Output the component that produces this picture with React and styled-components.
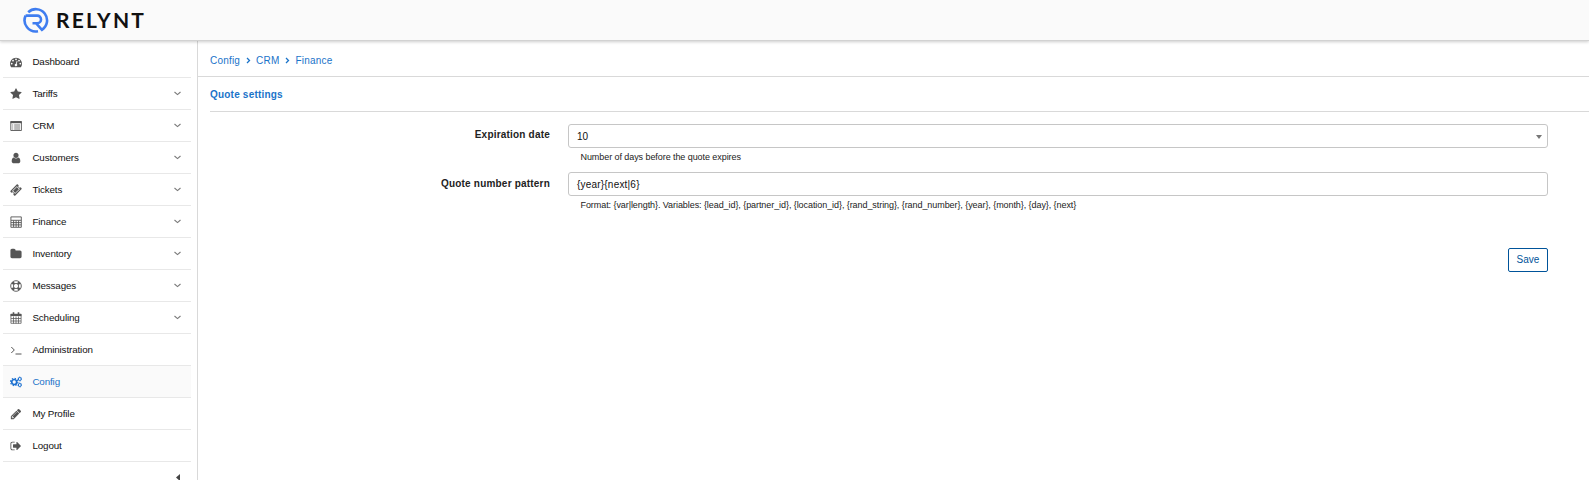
import React from 'react';
import styled, { createGlobalStyle } from 'styled-components';

const GlobalStyle = createGlobalStyle`
  * { box-sizing: border-box; }
  body { margin: 0; background: #fff; overflow: hidden; font-family: "Liberation Sans", Arial, sans-serif; color: #222; }
`;

const Page = styled.div`
  display: flex;
  flex-direction: column;
  height: 480px;
  overflow: hidden;
`;

const Header = styled.header`
  display: flex;
  align-items: center;
  flex: none;
  height: 41px;
  padding-left: 23px;
  background: #fafafa;
  border-bottom: 1px solid #d2d2d2;
  box-shadow: 0 1px 3px rgba(0, 0, 0, 0.2);
  z-index: 1;
`;

const LogoMark = styled.svg`
  width: 26px;
  height: 26px;
`;

const LogoText = styled.span`
  margin-left: 7px;
  padding-bottom: 1px;
  font: 700 21px/25px Lato, sans-serif;
  letter-spacing: 2.2px;
  color: #111;
`;

const Body = styled.div`
  display: flex;
  flex: 1;
  min-height: 0;
`;

const Sidebar = styled.nav`
  flex: none;
  width: 198px;
  padding: 5px 6px 0 3px;
  border-right: 1px solid #d9d9d9;
`;

const NavItem = styled.a`
  display: flex;
  align-items: center;
  height: 32px;
  padding: 0 7px;
  border-bottom: 1px solid #e8e8e8;
  background: ${(p) => (p.$active ? '#fafafa' : 'transparent')};
  color: ${(p) => (p.$active ? '#1a73c9' : '#111')};
  font-size: 9.8px;
  letter-spacing: -0.12px;
`;

const NavIcon = styled.svg`
  width: 12px;
  height: 12px;
  color: ${(p) => (p.$active ? '#1a6fd0' : '#555')};
`;

const NavLabel = styled.span`
  flex: 1;
  margin-left: 10.4px;
`;

const Chevron = styled.svg`
  width: 7px;
  height: 5px;
  margin-right: 3px;
`;

const CollapseRow = styled.div`
  display: flex;
  justify-content: flex-end;
  padding: 12px 11px 0 0;
`;

const Main = styled.main`
  flex: 1;
  min-width: 0;
`;

const Breadcrumbs = styled.div`
  display: flex;
  align-items: center;
  height: 36px;
  padding: 3px 0 0 12px;
  border-bottom: 1px solid #d9d9d9;
  font-size: 10px;
  letter-spacing: 0.2px;
  color: #1a73c9;
`;

const Separator = styled.svg`
  width: 5px;
  height: 7px;
  margin: 0 5px 0 6px;
`;

const SectionTitle = styled.h2`
  height: 35px;
  margin: 0 0 12px 12px;
  border-bottom: 1px solid #d9d9d9;
  font-size: 10px;
  line-height: 36px;
  letter-spacing: 0.2px;
  color: #1a73c9;
`;

const Field = styled.div`
  display: grid;
  grid-template-columns: 352px 980px;
  column-gap: 18px;
  height: 48px;
`;

const Label = styled.label`
  padding-top: ${(p) => p.$offset}px;
  text-align: right;
  font-size: 10px;
  line-height: 12px;
  font-weight: 700;
  letter-spacing: 0.2px;
  color: #222;
`;

const Control = styled.div`
  display: flex;
  align-items: center;
  justify-content: space-between;
  height: 24px;
  padding: 1px 5px 0 8px;
  border: 1px solid #c6c6c6;
  border-radius: 3px;
  font-size: 10px;
  letter-spacing: ${(p) => p.$spacing || 0}px;
  color: #111;
`;

const Help = styled.div`
  padding: 4px 0 0 12.5px;
  font-size: 9px;
  line-height: 11px;
  letter-spacing: -0.07px;
`;

const Actions = styled.div`
  display: flex;
  justify-content: flex-end;
  margin-top: 28px;
  padding-right: 41px;
`;

const SaveButton = styled.button`
  width: 40px;
  height: 24px;
  padding: 0 0 1px;
  border: 1px solid #00549a;
  border-radius: 2px;
  background: #fff;
  font: 10px "Liberation Sans", Arial, sans-serif;
  color: #00549a;
`;

const solid = {
  dashboard: 'M384 1152q0-53-37.5-90.5t-90.5-37.5-90.5 37.5-37.5 90.5 37.5 90.5 90.5 37.5 90.5-37.5 37.5-90.5zm192-448q0-53-37.5-90.5t-90.5-37.5-90.5 37.5-37.5 90.5 37.5 90.5 90.5 37.5 90.5-37.5 37.5-90.5zm428 481l101-382q6-26-7.5-48.5t-38.5-29.5-48 6.5-30 39.5l-101 382q-60 5-107 43.5t-63 98.5q-20 77 20 146t117 89 146-20 89-117q16-60-6-117t-72-91zm660-33q0-53-37.5-90.5t-90.5-37.5-90.5 37.5-37.5 90.5 37.5 90.5 90.5 37.5 90.5-37.5 37.5-90.5zm-640-640q0-53-37.5-90.5t-90.5-37.5-90.5 37.5-37.5 90.5 37.5 90.5 90.5 37.5 90.5-37.5 37.5-90.5zm448 192q0-53-37.5-90.5t-90.5-37.5-90.5 37.5-37.5 90.5 37.5 90.5 90.5 37.5 90.5-37.5 37.5-90.5zm320 448q0 261-141 483-19 29-54 29h-1402q-35 0-54-29-141-221-141-483 0-182 71-348t191-286 286-191 348-71 348 71 286 191 191 286 71 348z',
  star: 'M1728 647q0 22-26 48l-363 354 86 500q1 7 1 20 0 21-10.5 35.5t-30.5 14.5q-19 0-40-12l-449-236-449 236q-22 12-40 12-21 0-31.5-14.5t-10.5-35.5q0-6 2-20l86-500-364-354q-25-27-25-48 0-37 56-46l502-73 225-455q19-41 49-41t49 41l225 455 502 73q56 9 56 46z',
  user: 'M1536 1399q0 109-62.5 187t-150.5 78h-854q-88 0-150.5-78t-62.5-187q0-85 8.5-160.5t31.5-152 58.5-131 94-89 134.5-34.5q131 128 313 128t313-128q76 0 134.5 34.5t94 89 58.5 131 31.5 152 8.5 160.5zm-256-887q0 159-112.5 271.5t-271.5 112.5-271.5-112.5-112.5-271.5 112.5-271.5 271.5-112.5 271.5 112.5 112.5 271.5z',
  ticket: 'M1024 452l316 316-572 572-316-316zm-211 979l618-618q19-19 19-45t-19-45l-362-362q-18-18-45-18t-45 18l-618 618q-19 19-19 45t19 45l362 362q18 18 45 18t45-18zm889-637l-907 908q-37 37-90.5 37t-90.5-37l-126-126q56-56 56-136t-56-136-136-56-136 56l-125-126q-37-37-37-90.5t37-90.5l907-906q37-37 90.5-37t90.5 37l125 125q-56 56-56 136t56 136 136 56 136-56l126 125q37 37 37 90.5t-37 90.5z',
  folder: 'M1728 608v704q0 92-66 158t-158 66h-1216q-92 0-158-66t-66-158v-960q0-92 66-158t158-66h320q92 0 158 66t66 158v32h672q92 0 158 66t66 158z',
  logout: 'M704 1440q0 4 1 20t.5 26.5-3 23.5-10 19.5-20.5 6.5h-320q-119 0-203.5-84.5t-84.5-203.5v-704q0-119 84.5-203.5t203.5-84.5h320q13 0 22.5 9.5t9.5 22.5q0 4 1 20t.5 26.5-3 23.5-10 19.5-20.5 6.5h-320q-66 0-113 47t-47 113v704q0 66 47 113t113 47h312l11.5 1 11.5 3 8 5.5 7 9 2 13.5zm928-544q0 26-19 45l-544 544q-19 19-45 19t-45-19-19-45v-288h-448q-26 0-45-19t-19-45v-384q0-26 19-45t45-19h448v-288q0-26 19-45t45-19 45 19l544 544q19 19 19 45z',
  pencil: 'M491 1536l91-91-235-235-91 91v107h128v128h107zm523-928q0-22-22-22-10 0-17 7l-542 542q-7 7-7 17 0 22 22 22 10 0 17-7l542-542q7-7 7-17zm-54-192l416 416-832 832h-416v-416zm683 96q0 53-37 90l-166 166-416-416 166-165q36-38 90-38 53 0 91 38l235 234q37 39 37 91z',
};

const drawn = {
  list: <><path d="M.8 1.5h10.6v9H.8z" strokeWidth=".9" /><path d="M.5 2.3h11.2" strokeWidth="1.8" /><path d="M2.2 5h1M4.2 5h5.8M2.2 7h1M4.2 7h5.8M2.2 9h1M4.2 9h5.8" strokeWidth=".8" /></>,
  calculator: <path d="M.9.9h10.4v10.4H.9zM1 4.3h10.2M3.6 4.5V11M6.1 4.5V11M8.6 4.5V11M1 6.6h10.2M1 8.9h10.2" strokeWidth=".9" />,
  ring: <><circle cx="6" cy="6" r="5.3" strokeWidth=".9" /><circle cx="6" cy="6" r="2.6" strokeWidth=".9" /><path d="M2.3 2.3l1.9 1.9M9.7 2.3L7.8 4.2M2.3 9.7l1.9-1.9M9.7 9.7L7.8 7.8" strokeWidth="2.6" /></>,
  calendar: <><path d="M.9 2.3h10.2v9H.9zM1 6.5h10M1 9h10M3.5 4.5v7M6 4.5v7M8.5 4.5v7" strokeWidth=".75" /><path d="M.6 3h10.8" strokeWidth="2.2" /><path d="M3.5.3v3M8.5.3v3" strokeWidth="1.6" /></>,
  terminal: <path d="M1.3 3l3 3-3 3M5.5 10h6" strokeWidth="1" />,
  cogs: (
    <>
      <circle cx="4.2" cy="6" r="2.5" strokeWidth="1.7" />
      <circle cx="4.2" cy="6" r="3.7" strokeWidth="1.1" strokeDasharray="1.45 1.45" />
      <circle cx="9.8" cy="3" r="1.5" strokeWidth="1" />
      <circle cx="9.8" cy="3" r="2.1" strokeWidth=".6" strokeDasharray=".9 .75" />
      <circle cx="9.8" cy="9" r="1.5" strokeWidth="1" />
      <circle cx="9.8" cy="9" r="2.1" strokeWidth=".6" strokeDasharray=".9 .75" />
    </>
  ),
};

function Icon({ name, active }) {
  if (solid[name]) {
    return <NavIcon $active={active} viewBox="0 0 1792 1792" fill="currentColor"><path d={solid[name]} /></NavIcon>;
  }
  return <NavIcon $active={active} viewBox="0 0 12 12" fill="none" stroke="currentColor">{drawn[name]}</NavIcon>;
}

const items = [
  ['Dashboard', 'dashboard', false],
  ['Tariffs', 'star', true],
  ['CRM', 'list', true],
  ['Customers', 'user', true],
  ['Tickets', 'ticket', true],
  ['Finance', 'calculator', true],
  ['Inventory', 'folder', true],
  ['Messages', 'ring', true],
  ['Scheduling', 'calendar', true],
  ['Administration', 'terminal', false],
  ['Config', 'cogs', false],
  ['My Profile', 'pencil', false],
  ['Logout', 'logout', false],
];

const Crumb = () => (
  <Separator viewBox="0 0 5 7" fill="none" stroke="#1a73c9" strokeWidth="1.3"><path d="M1 1l2.5 2.5L1 6" /></Separator>
);

export default function App() {
  return (
    <Page>
      <GlobalStyle />
      <Header>
        <LogoMark viewBox="0 0 26 26" fill="none" stroke="#3f7df0" strokeWidth="2.6">
          <path d="M5.2 5.2A11.2 11.2 0 1 1 18.9 22.8L13.2 16.4M2.6 8.6h11.6a3.8 3.8 0 0 1 0 7.6H9.5M2.6 8.6A11.2 11.2 0 0 0 15 24.2" />
        </LogoMark>
        <LogoText>RELYNT</LogoText>
      </Header>
      <Body>
        <Sidebar>
          {items.map(([label, icon, expandable]) => {
            const active = label === 'Config';
            return (
              <NavItem key={label} $active={active}>
                <Icon name={icon} active={active} />
                <NavLabel>{label}</NavLabel>
                {expandable && (
                  <Chevron viewBox="0 0 7 5" fill="none" stroke="#7a7a7a" strokeWidth="1.1"><path d="M.5 1l3 2.6L6.5 1" /></Chevron>
                )}
              </NavItem>
            );
          })}
          <CollapseRow>
            <svg width="4" height="7" viewBox="0 0 4 7"><path d="M4 0v7L0 3.5z" fill="#444" /></svg>
          </CollapseRow>
        </Sidebar>
        <Main>
          <Breadcrumbs>
            <span>Config</span><Crumb /><span>CRM</span><Crumb /><span>Finance</span>
          </Breadcrumbs>
          <SectionTitle>Quote settings</SectionTitle>
          <Field>
            <Label $offset={5}>Expiration date</Label>
            <div>
              <Control>
                <span>10</span>
                <svg width="6" height="4" viewBox="0 0 6 4"><path d="M0 0h6L3 4z" fill="#777" /></svg>
              </Control>
              <Help>Number of days before the quote expires</Help>
            </div>
          </Field>
          <Field>
            <Label $offset={6}>Quote number pattern</Label>
            <div>
              <Control $spacing={0.2}>{'{year}{next|6}'}</Control>
              <Help>{'Format: {var|length}. Variables: {lead_id}, {partner_id}, {location_id}, {rand_string}, {rand_number}, {year}, {month}, {day}, {next}'}</Help>
            </div>
          </Field>
          <Actions><SaveButton>Save</SaveButton></Actions>
        </Main>
      </Body>
    </Page>
  );
}
